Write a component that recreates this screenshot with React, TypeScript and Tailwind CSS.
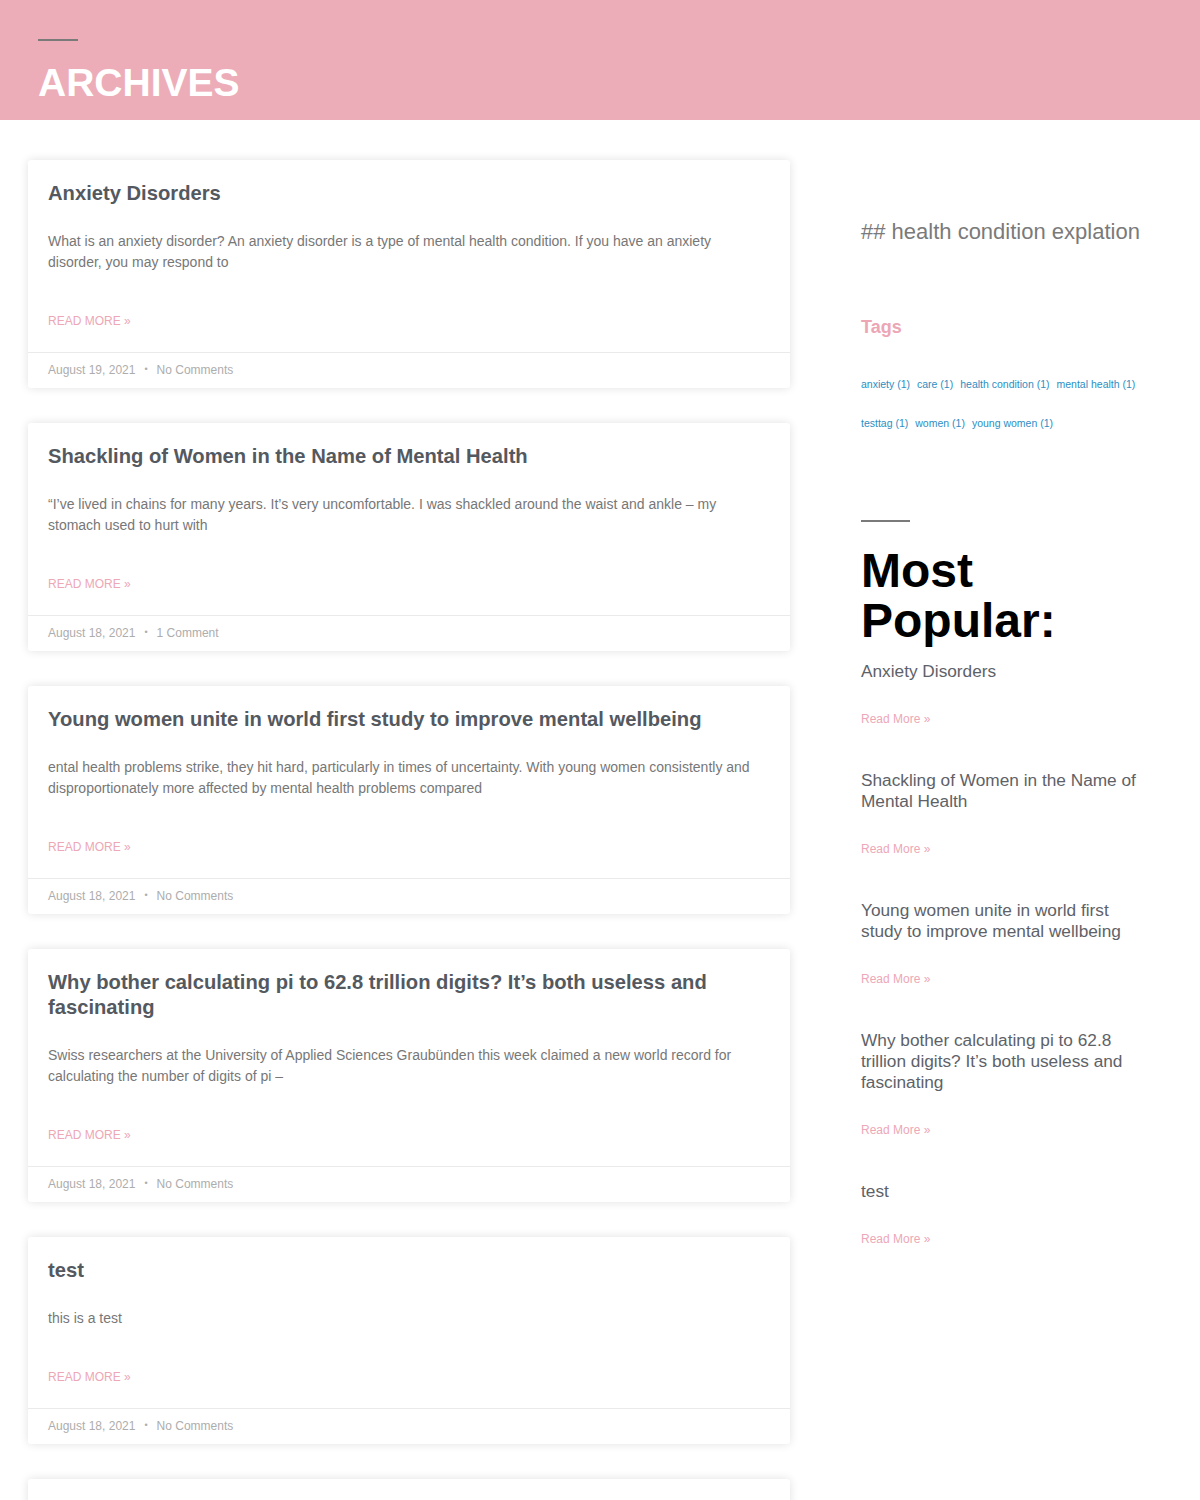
import React from "react";

// Archive listing: pink page header, post cards on the left, sidebar on the right.

interface Post {
  title: string;
  excerpt: string;
  date: string;
  comments: string;
}

const posts: Post[] = [
  {
    title: "Anxiety Disorders",
    excerpt:
      "What is an anxiety disorder? An anxiety disorder is a type of mental health condition. If you have an anxiety disorder, you may respond to",
    date: "August 19, 2021",
    comments: "No Comments",
  },
  {
    title: "Shackling of Women in the Name of Mental Health",
    excerpt:
      "“I’ve lived in chains for many years. It’s very uncomfortable. I was shackled around the waist and ankle – my stomach used to hurt with",
    date: "August 18, 2021",
    comments: "1 Comment",
  },
  {
    title: "Young women unite in world first study to improve mental wellbeing",
    excerpt:
      "ental health problems strike, they hit hard, particularly in times of uncertainty. With young women consistently and disproportionately more affected by mental health problems compared",
    date: "August 18, 2021",
    comments: "No Comments",
  },
  {
    title: "Why bother calculating pi to 62.8 trillion digits? It’s both useless and fascinating",
    excerpt:
      "Swiss researchers at the University of Applied Sciences Graubünden this week claimed a new world record for calculating the number of digits of pi –",
    date: "August 18, 2021",
    comments: "No Comments",
  },
  {
    title: "test",
    excerpt: "this is a test",
    date: "August 18, 2021",
    comments: "No Comments",
  },
];

const tags = [
  "anxiety (1)",
  "care (1)",
  "health condition (1)",
  "mental health (1)",
  "testtag (1)",
  "women (1)",
  "young women (1)",
];

const popular = [
  "Anxiety Disorders",
  "Shackling of Women in the Name of Mental Health",
  "Young women unite in world first study to improve mental wellbeing",
  "Why bother calculating pi to 62.8 trillion digits? It’s both useless and fascinating",
  "test",
];

const cardShadow = "rounded-[3px] bg-white shadow-[0_0_10px_rgba(0,0,0,0.12)]";

function PostCard({ post }: { post: Post }) {
  return (
    <article className={cardShadow}>
      <div className="px-5 pb-[22px] pt-[21px]">
        <h2 className="text-[20.2px] font-bold leading-[25px] text-[#54595f]">{post.title}</h2>
        <p className="mt-[25px] max-w-[710px] text-[14px] leading-[21px] text-[#777777]">{post.excerpt}</p>
        <a className="mt-[39px] block text-[12px] leading-[18px] text-[#eda7b6]">READ MORE »</a>
      </div>
      <div className="flex h-[36px] items-center border-t border-[#eaeaea] px-5 pb-[2px] text-[12px] text-[#adadad]">
        <span>{post.date}</span>
        <span className="mx-[9px] text-[9px]">•</span>
        <span>{post.comments}</span>
      </div>
    </article>
  );
}

export default function App() {
  return (
    <div className="h-[1500px] overflow-hidden bg-white font-['Liberation_Sans',Arial,sans-serif]">
      <header className="h-[120px] bg-[#ecadb8] px-[38px] pt-[39px]">
        <div className="h-[2px] w-[40px] bg-[#7a7a7a]" />
        <h1 className="mt-[18px] text-[39px] font-bold leading-[48px] text-white">ARCHIVES</h1>
      </header>

      <div className="flex pl-[28px]">
        <main className="flex w-[762px] flex-col gap-[35px] pt-[40px]">
          {posts.map((p) => (
            <PostCard key={p.title} post={p} />
          ))}
          {/* next post, only its top edge is in view */}
          <div className={`${cardShadow} h-[60px]`} />
        </main>

        <aside className="ml-[71px] flex w-[286px] flex-col pt-[99px]">
          <p className="text-[22px] leading-[26px] text-[#7a7a7a]">## health condition explation</p>

          <h3 className="mt-[71px] text-[18px] font-bold leading-[22px] text-[#eca6b4]">Tags</h3>
          <div className="mt-[27px] flex flex-wrap gap-x-[7px] text-[10.5px] leading-[39px] text-[#2d8ec2]">
            {tags.map((t) => (
              <a key={t}>{t}</a>
            ))}
          </div>

          <div className="mt-[77px] h-[2px] w-[49px] bg-[#7a7a7a]" />
          <h2 className="mt-[24px] text-[48px] font-bold leading-[50px] text-black">Most Popular:</h2>

          <div className="mt-[15px] flex flex-col">
            {popular.map((title, i) => (
              <div key={title} className={i === 0 ? "" : "mt-[43px]"}>
                <p className="text-[17.25px] leading-[21px] text-[#5e6268]">{title}</p>
                <a className="mt-[29px] block text-[12px] leading-[16px] text-[#eda7b6]">Read More »</a>
              </div>
            ))}
          </div>
        </aside>
      </div>
    </div>
  );
}
